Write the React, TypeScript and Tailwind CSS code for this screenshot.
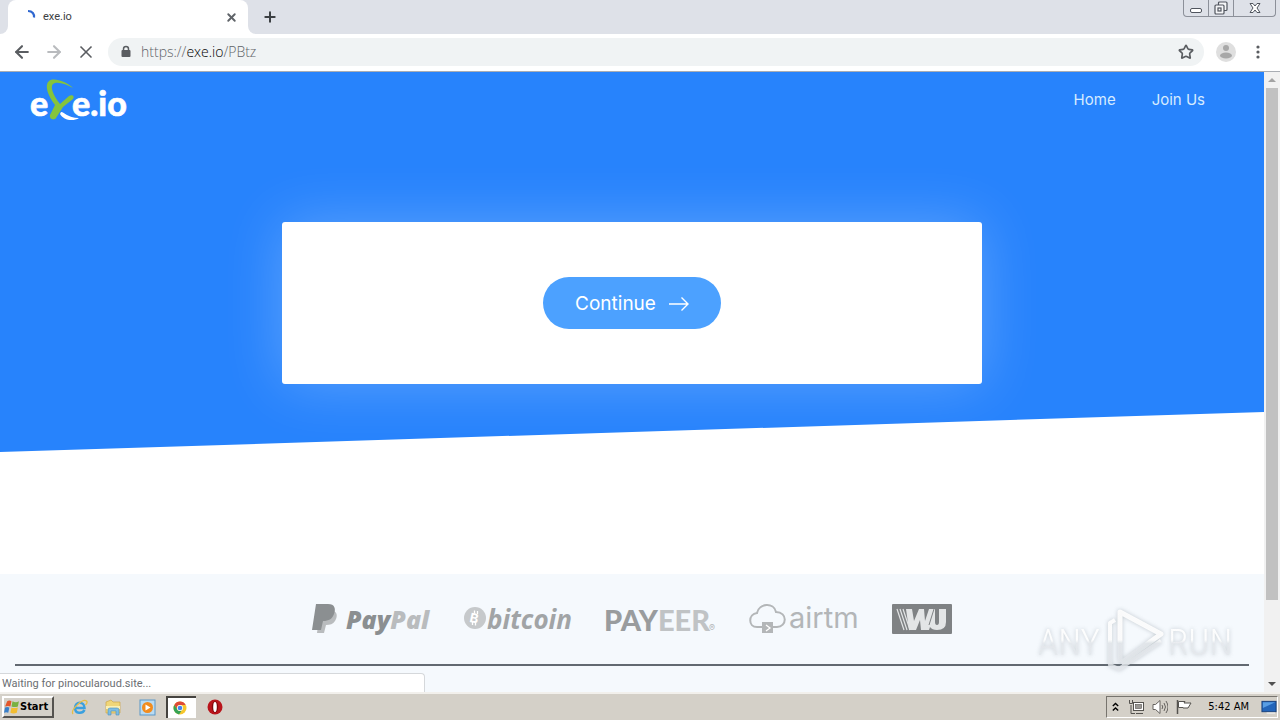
import type { ReactNode } from "react";
import { ArrowLeft, ArrowRight, Plus, Star, X } from "lucide-react";

const UI_FONT = "font-['Roboto',sans-serif]";
const SITE_FONT = "font-['Inter',sans-serif]";

/* ---------- Browser chrome ---------- */

function TabStrip() {
  return (
    <div className="flex h-[34px] shrink-0 items-start justify-between bg-[#dee1e8]">
      <div className="flex h-full items-center">
        <div className="flex h-full w-2 items-end bg-white">
          <div className="h-full w-full rounded-br-lg bg-[#dee1e8]" />
        </div>
        <div className="flex h-full w-60 items-center rounded-t-lg bg-white pl-3.5 pr-2.5">
          <svg className="size-4" viewBox="0 0 16 16" fill="none" aria-hidden="true">
            <path d="M6 2c4.500 0 6.500 3 6 6.500" stroke="#2f67d0" strokeWidth="2.200" />
          </svg>
          <span className="ml-[5px] flex-1 text-[11px] text-[#3c4043]">exe.io</span>
          <button type="button" aria-label="Close tab" className="text-[#5f6368]">
            <X size={13} strokeWidth={3.5} />
          </button>
        </div>
        <div className="flex h-full w-2 bg-white">
          <div className="h-full w-full rounded-bl-lg bg-[#dee1e8]" />
        </div>
        <button type="button" aria-label="New tab" className="ml-1.5 text-[#3c4043]">
          <Plus size={16} strokeWidth={3} />
        </button>
      </div>
      <WindowControls />
    </div>
  );
}

function WindowControls() {
  return (
    <div className="mr-1 flex h-[17px] rounded-b-sm border border-t-0 border-[#8c9099] text-[#50555e]">
      <button type="button" aria-label="Minimize" className="flex w-6 items-center justify-center">
        <svg width="14" height="14" viewBox="0 0 14 14" fill="#fff" stroke="currentColor">
          <rect x="1.500" y="7.500" width="11" height="4" rx="1.500" />
        </svg>
      </button>
      <button
        type="button"
        aria-label="Restore"
        className="flex w-[26px] items-center justify-center border-x border-[#8c9099]"
      >
        <svg width="14" height="14" viewBox="0 0 14 14" fill="#f4f5f7" stroke="currentColor" strokeWidth="1.200">
          <rect x="4.500" y="1" width="8.500" height="8.500" rx="1" />
          <rect x="1" y="4" width="9" height="9" rx="1" />
          <rect x="4" y="7" width="3" height="3" />
        </svg>
      </button>
      <button type="button" aria-label="Close" className="flex w-[41px] items-center justify-center">
        <svg width="14" height="14" viewBox="0 0 14 14" fill="#fff" stroke="currentColor">
          <path d="M2 2.500h3l2 2.500 2-2.500h3L9 7l3 4.500H9L7 9l-2 2.500H2L5 7z" />
        </svg>
      </button>
    </div>
  );
}

function Toolbar() {
  return (
    <div className="flex h-[38px] shrink-0 items-center border-b border-[#a9adb3] bg-white px-3 pb-px">
      <button type="button" aria-label="Back" className="flex size-5 items-center justify-center text-[#5a5d61]">
        <ArrowLeft size={20} strokeWidth={2.5} />
      </button>
      <button type="button" aria-label="Forward" className="ml-3 flex size-5 items-center justify-center text-[#b9bbbe]">
        <ArrowRight size={20} strokeWidth={2.5} />
      </button>
      <button type="button" aria-label="Stop" className="ml-3 flex size-5 items-center justify-center text-[#5a5d61]">
        <X size={20} strokeWidth={2} />
      </button>
      <div className="ml-3 flex h-7 flex-1 items-center rounded-full bg-[#f0f3f4] pl-3 pr-2.5">
        <svg width="12" height="14" viewBox="0 0 12 14" aria-hidden="true">
          <rect x="1.500" y="5" width="9" height="7" rx="1" fill="#5a5d61" />
          <path d="M3.500 5.500V4a2.500 2.500 0 0 1 5 0v1.500" fill="none" stroke="#5a5d61" strokeWidth="1.500" />
        </svg>
        <div className="ml-[9px] flex-1 whitespace-nowrap font-['Open_Sans',sans-serif] text-sm font-light text-[#5f6368]">
          https://<span className="text-black">exe.io</span>/PBtz
        </div>
        <button type="button" aria-label="Bookmark this page" className="text-[#5a5d61]">
          <Star size={16} strokeWidth={2.5} strokeLinejoin="miter" />
        </button>
      </div>
      <button type="button" aria-label="Profile" className="ml-3">
        <svg width="20" height="20" viewBox="0 0 20 20">
          <circle cx="10" cy="10" r="10" fill="#dfdfdf" />
          <circle cx="10" cy="6" r="3" fill="#a8a8a8" />
          <ellipse cx="10" cy="13.500" rx="6" ry="3" fill="#a8a8a8" />
        </svg>
      </button>
      <button type="button" aria-label="Menu" className="ml-3 flex w-5 justify-center">
        <svg width="4" height="14" viewBox="0 0 4 14" fill="#5a5d61">
          <circle cx="2" cy="2" r="1.600" />
          <circle cx="2" cy="7" r="1.600" />
          <circle cx="2" cy="12" r="1.600" />
        </svg>
      </button>
    </div>
  );
}

function Scrollbar() {
  return (
    <div className="flex w-4 shrink-0 flex-col items-center bg-[#f1f1f1]" aria-hidden="true">
      <div className="flex h-4 items-center">
        <svg width="8" height="4" viewBox="0 0 8 4">
          <path d="M0 4l4-4 4 4z" fill="#a3a3a3" />
        </svg>
      </div>
      <div className="w-full flex-1 px-0.5">
        <div className="h-[87%] bg-[#c1c1c1]" />
      </div>
      <div className="flex h-4 items-center">
        <svg width="8" height="4" viewBox="0 0 8 4">
          <path d="M0 0l4 4 4-4z" fill="#505050" />
        </svg>
      </div>
    </div>
  );
}

/* ---------- Site ---------- */

function SiteLogo() {
  return (
    <svg className="overflow-visible" width="100" height="44" viewBox="0 0 100 44" role="img" aria-label="exe.io">
      <g
        fill="#fff"
        stroke="#fff"
        strokeWidth="0.600"
        fontFamily="Lato, sans-serif"
        fontWeight="900"
        fontSize="34"
      >
        <text x="0" y="38">e</text>
        <text x="42" y="38">e.io</text>
      </g>
      <path d="M31 34c4 0 6 6 18 6-6 4-16 2-19-4z" fill="#fff" />
      <path
        d="M43 10C37 4 24-1 19 3c-5 4-1 15 6 24l-5 10c-1 4 4 6 6 3l7-11 10-8c2-3-1-5-4-3l-9 8c-7-9-10-17-7-20 4-3 13 0 20 4z"
        fill="#85c43c"
      />
    </svg>
  );
}

function Hero() {
  return (
    <section className="flex h-[380px] shrink-0 flex-col bg-[#2783fc] text-white [clip-path:polygon(0_0,100%_0,100%_calc(100%_-_40px),0_100%)]">
      <header className="flex h-14 items-center justify-between pl-[30px] pr-[59px]">
        <a href="#home">
          <SiteLogo />
        </a>
        <nav className="flex gap-9 text-[15px] text-[#d6ebff]">
          <a href="#home">Home</a>
          <a href="#join">Join Us</a>
        </nav>
      </header>
      <div className="mx-auto mt-[94px] flex h-[162px] w-full max-w-[700px] items-center justify-center rounded-[3px] bg-white shadow-[0_0_60px_rgba(255,255,255,0.25)]">
        <button
          type="button"
          className="flex h-[52px] items-center gap-[13px] rounded-[26px] bg-[#4ca1ff] px-8 pt-0.5 text-[19px] text-white"
        >
          Continue
          <svg width="20" height="14" viewBox="0 0 20 14" fill="none" stroke="currentColor" strokeWidth="1.400" aria-hidden="true">
            <path d="M0 7h19M12.500 0.500L19 7l-6.500 6.500" />
          </svg>
        </button>
      </div>
    </section>
  );
}

function PayPalLogo() {
  return (
    <svg className="overflow-visible" width="119" height="32" viewBox="0 0 119 32" role="img" aria-label="PayPal">
      <path d="M8 8h14c4 2 3 7 1 10-2 3-5 4-9 4l-2 8H5z" fill="#b9bcbe" />
      <path d="M4 1h12c7 0 8 5 6 10-2 5-5 7-11 7l-2 9H0z" fill="#8b8f91" />
      <text
        x="34"
        y="26"
        fill="#8b8f91"
        fontFamily="Open Sans, sans-serif"
        fontWeight="800"
        fontStyle="italic"
        fontSize="25"
      >
        Pay<tspan fill="#b9bcbe">Pal</tspan>
      </text>
    </svg>
  );
}

function BitcoinLogo() {
  return (
    <svg className="overflow-visible" width="109" height="32" viewBox="0 0 109 32" role="img" aria-label="bitcoin">
      <circle cx="11" cy="15" r="11" fill="#c6c9cb" />
      <text x="6" y="20" fill="#fff" fontFamily="Inter, sans-serif" fontWeight="700" fontSize="13" transform="rotate(12 11 15)">
        B
      </text>
      <path d="M10.500 7.500v3M13.500 8v3M8.500 19v3M11.500 19.500v3" stroke="#fff" strokeWidth="1.300" />
      <text x="23" y="26" fill="#a1a4a6" fontFamily="Open Sans, sans-serif" fontWeight="700" fontStyle="italic" fontSize="26">
        bitcoin
      </text>
    </svg>
  );
}

function PayeerLogo() {
  return (
    <svg className="overflow-visible" width="110" height="32" viewBox="0 0 110 32" role="img" aria-label="PAYEER">
      <text x="-2" y="28" fill="#999c9e" fontFamily="Lato, sans-serif" fontWeight="900" fontSize="29">
        PAY<tspan fill="#c0c3c5">EER</tspan>
      </text>
      <text x="103" y="28" fill="#b4b7b9" fontFamily="Inter, sans-serif" fontSize="9">
        ®
      </text>
    </svg>
  );
}

function AirtmLogo() {
  return (
    <svg className="overflow-visible" width="110" height="32" viewBox="0 0 110 32" role="img" aria-label="airtm">
      <path
        d="M13 24H8c-9 0-9-13 0-14C10 0 25-1 27 9c12 0 11 15 1 15h-4"
        fill="none"
        stroke="#b3b6b8"
        strokeWidth="2"
      />
      <rect x="13" y="19" width="11" height="11" fill="#b3b6b8" />
      <path d="M17 22l4 3-4 3" fill="none" stroke="#fff" strokeWidth="1.300" />
      <text x="40" y="25" fill="#b3b6b8" fontFamily="Inter, sans-serif" fontSize="29">
        airtm
      </text>
    </svg>
  );
}

function WesternUnionLogo() {
  return (
    <svg width="60" height="30" viewBox="0 0 60 30" role="img" aria-label="WU">
      <rect width="60" height="30" rx="1" fill="#7f8284" />
      <path d="M5 5l7 21M8 5l7 21M11 5l7 21" stroke="#e3e5e6" strokeWidth="1.200" />
      <path
        d="M14 5h6l2 12 5-12h5l1 12 4-12h6v13q0 3 2 3t2-3V5h7v13q0 8-9 8-5 0-7-3l-1 3h-8l-1-10-4 10h-7z"
        fill="#e3e5e6"
      />
      <path d="M42 5l-5 16" stroke="#7f8284" />
    </svg>
  );
}

function Footer() {
  return (
    <footer className="flex-1 bg-[#f5f9fd] px-[15px]">
      <div className="flex h-[90px] items-center justify-center gap-[33px]">
        <PayPalLogo />
        <BitcoinLogo />
        <PayeerLogo />
        <AirtmLogo />
        <WesternUnionLogo />
      </div>
      <hr className="border-t-2 border-[#626971]" />
    </footer>
  );
}

function Watermark() {
  return (
    <svg
      className="pointer-events-none absolute bottom-[18px] right-7 overflow-visible drop-shadow-[0_0_2px_rgba(120,130,140,0.45)]"
      width="200"
      height="68"
      viewBox="0 0 200 68"
      role="img"
      aria-label="ANY RUN"
    >
      <defs>
        <linearGradient id="wm" x1="0" y1="0" x2="0" y2="68" gradientUnits="userSpaceOnUse">
          <stop offset="0.5" stopColor="#fff" stopOpacity="0.9" />
          <stop offset="0.55" stopColor="#e4e8ec" stopOpacity="0.8" />
        </linearGradient>
      </defs>
      <g fill="url(#wm)" fontFamily="Roboto Condensed, Roboto, sans-serif" fontWeight="300" fontSize="37">
        <text x="2" y="49">ANY</text>
        <text x="132" y="49">RUN</text>
      </g>
      <g fill="none" stroke="url(#wm)" strokeWidth="5" strokeLinejoin="round">
        <path d="M84 56V6l41 22-40 29" />
        <path d="M79 14l-5 3v42l9 4 42-28" strokeWidth="4" />
      </g>
    </svg>
  );
}

/* ---------- Taskbar ---------- */

function TaskIcon({ label, active, children }: { label: string; active?: boolean; children: ReactNode }) {
  return (
    <button
      type="button"
      aria-label={label}
      className={
        active
          ? "flex h-[22px] w-[30px] items-center justify-center border-l-2 border-t-2 border-[#45433f] bg-white pr-1"
          : "flex h-[22px] w-[30px] items-center justify-center"
      }
    >
      {children}
    </button>
  );
}

function Taskbar() {
  return (
    <div className="flex h-7 shrink-0 items-center justify-between border-t-2 border-[#f2f0ec] bg-[#d4d0c8] px-0.5">
      <div className="flex items-center">
        <button
          type="button"
          className="flex h-[22px] w-[52px] items-center border-2 border-b-[#55534f] border-l-white border-r-[#55534f] border-t-white font-['DejaVu_Sans_Condensed','DejaVu_Sans',sans-serif] text-[11px] font-bold text-black"
        >
          <svg className="size-4 shrink-0" viewBox="0 0 15 15" aria-hidden="true">
            <path d="M3 2q2-1 4 0L6 7Q4 6 1 7z" fill="#e4572b" />
            <path d="M8 2q3 2 6 0l-1 5q-3 1-6 0z" fill="#79b142" />
            <path d="M1 8q2-1 4 0l-1 5q-2-1-4 0z" fill="#397fc9" />
            <path d="M7 8q2 1 6 0l-1 5q-3 1-6 0z" fill="#f2bd32" />
          </svg>
          Start
        </button>
        <div className="ml-2.5 flex items-center gap-1">
          <TaskIcon label="Internet Explorer">
            <svg width="17" height="17" viewBox="0 0 17 17" fill="none">
              <path d="M4 9h9.500c0-7-9.500-7-9.500 0 0 6 7.500 6 9.500 2" stroke="#3aa0df" strokeWidth="2.500" />
              <path d="M2 15C-1 11 12-1 15.500 2c1 1 0 3-1 4" stroke="#e6bd45" strokeWidth="1.300" />
            </svg>
          </TaskIcon>
          <TaskIcon label="Windows Explorer">
            <svg width="17" height="17" viewBox="0 0 17 17">
              <path d="M1 3l5-2 2 2h7v11H1z" fill="#f0d678" stroke="#cda849" strokeWidth="0.700" />
              <path d="M1 7h14v3H1z" fill="#faf0b5" />
              <path d="M3 16v-5q0-2 2-2h7q2 0 2 2v5h-3v-4H6v4z" fill="#7dbde3" stroke="#4b91bc" strokeWidth="0.600" />
            </svg>
          </TaskIcon>
          <TaskIcon label="Media Player">
            <svg width="17" height="17" viewBox="0 0 17 17">
              <rect x="1" y="1" width="15" height="15" fill="#b9dbf2" stroke="#5a97c8" />
              <circle cx="8.500" cy="8.500" r="5.500" fill="#f28c1e" />
              <path d="M6.500 5.500l5 3-5 3z" fill="#fff" />
            </svg>
          </TaskIcon>
          <TaskIcon label="Chrome" active>
            <svg width="14" height="14" viewBox="0 0 14 14">
              <circle cx="7" cy="7" r="6.500" fill="#f6c62d" />
              <path d="M1.300 4A6.500 6.500 0 0 1 12.700 4H7a3 3 0 0 0-3 4z" fill="#df4a37" />
              <path d="M1.300 4A6.500 6.500 0 0 0 6 13.500L9 9a3 3 0 0 1-5-1z" fill="#35a355" />
              <circle cx="7" cy="7" r="3" fill="#fff" />
              <circle cx="7" cy="7" r="2.300" fill="#4385ee" />
            </svg>
          </TaskIcon>
          <TaskIcon label="Opera">
            <svg width="16" height="16" viewBox="0 0 16 16">
              <circle cx="8" cy="8" r="7.500" fill="#b9141b" />
              <ellipse cx="8" cy="8" rx="3.200" ry="5.800" fill="#7e070c" />
              <ellipse cx="8" cy="8" rx="1.800" ry="5" fill="#fff" />
            </svg>
          </TaskIcon>
        </div>
      </div>

      <div className="flex h-[22px] items-center border border-b-white border-l-[#77746e] border-r-white border-t-[#77746e] pl-1 text-black">
        <svg width="9" height="10" viewBox="0 0 10 10" fill="none" stroke="currentColor" strokeWidth="1.500" aria-hidden="true">
          <path d="M2 4l3-3 3 3M2 9l3-3 3 3" />
        </svg>
        <svg className="ml-2" width="16" height="16" viewBox="0 0 16 16" stroke="#55534f" aria-hidden="true">
          <rect x="5.500" y="3.500" width="10" height="8" fill="#fff" />
          <rect x="7.500" y="5.500" width="6" height="4" fill="#9a9894" strokeWidth="0.600" />
          <path d="M8 14.500h7M3 6v8.500h4M1.500 1v3.500h3V1" fill="none" />
        </svg>
        <svg className="ml-2" width="16" height="16" viewBox="0 0 16 16" stroke="#66635f" aria-hidden="true">
          <path d="M1 5.500h2.500L8 1.500v13L3.500 10.500H1z" fill="#fff" />
          <path d="M10 6q1.500 2 0 4M12 4q3 4 0 8M14 2q4 6 0 12" fill="none" />
        </svg>
        <svg className="ml-2" width="16" height="16" viewBox="0 0 16 16" stroke="#55534f" aria-hidden="true">
          <path d="M1.500 1v14" fill="none" strokeWidth="1.500" />
          <path d="M2.500 2.500H9L8 4h7l-3 5H7V8.500H2.500z" fill="#fff" />
        </svg>
        <time className="ml-4 whitespace-nowrap font-['DejaVu_Sans_Condensed','DejaVu_Sans',sans-serif] text-[11px]">5:42 AM</time>
        <svg className="ml-3" width="16" height="16" viewBox="0 0 17 16" aria-hidden="true">
          <rect x="1" y="2" width="15" height="11" fill="#2365ba" stroke="#173f7a" />
          <path d="M2 3h13L2 9z" fill="#599ee4" />
          <path d="M6 14.500h9" stroke="#e8e8e8" strokeWidth="1.500" />
        </svg>
      </div>
    </div>
  );
}

export default function App() {
  return (
    <div className={`flex h-screen flex-col overflow-hidden bg-white ${UI_FONT}`}>
      <TabStrip />
      <Toolbar />
      <div className="flex min-h-0 flex-1">
        <main className={`relative flex min-w-0 flex-1 flex-col ${SITE_FONT}`}>
          <Hero />
          <div className="h-[122px] shrink-0 bg-white" />
          <Footer />
          <div
            className={`absolute bottom-0 left-0 h-[19px] w-[425px] rounded-tr-sm border-r border-t border-[#d5d8db] bg-white pl-0.5 text-[11px] leading-5 text-[#6b6e72] ${UI_FONT}`}
          >
            Waiting for pinocularoud.site...
          </div>
          <Watermark />
        </main>
        <Scrollbar />
      </div>
      <Taskbar />
    </div>
  );
}
